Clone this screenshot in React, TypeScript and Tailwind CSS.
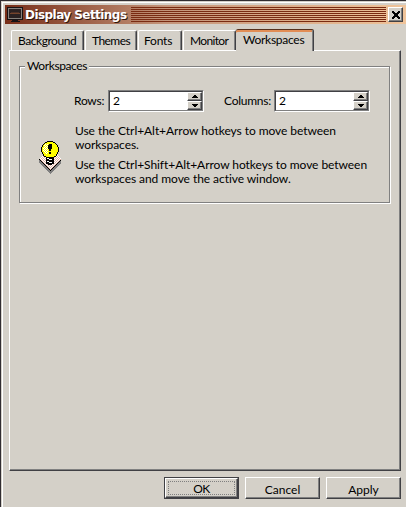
import React from "react";

const face = "bg-[#d4d0c8]";
const raised =
  "border border-b-[#404044] border-r-[#404044] border-l-white border-t-white shadow-[inset_-1px_-1px_0_#808080]";

function Tab({ children, className }: { children: React.ReactNode; className: string }) {
  return (
    <div className={`mr-px h-[20px] shrink-0 rounded-t-[2px] border-l border-t border-r border-l-white border-t-white border-r-[#404044] pt-px leading-[18px] whitespace-nowrap shadow-[inset_-1px_0_0_#808080] ${className}`}>
      {children}
    </div>
  );
}

function Arrow({ down = false }: { down?: boolean }) {
  return (
    <div className={`flex h-[9px] w-[15px] items-center justify-center ${raised} ${face}`}>
      <svg width="6" height="3" viewBox="0 0 6 3" shapeRendering="crispEdges">
        {down ? <path d="M0 0h6v1H5v1H4v1H2V2H1V1H0z" /> : <path d="M2 0h2v1h1v1h1v1H0V2h1V1h1z" />}
      </svg>
    </div>
  );
}

function Spinner({ value }: { value: string }) {
  return (
    <div className="h-[22px] w-[96px] border border-b-white border-r-white border-l-[#808080] border-t-[#808080]">
      <div className="flex h-[20px] w-[94px] justify-between border border-b-[#808080] border-r-[#808080] border-l-[#404044] border-t-[#404044] bg-white">
        <span className="pl-[3px] leading-[18px]">{value}</span>
        <div className="flex flex-col">
          <Arrow />
          <Arrow down />
        </div>
      </div>
    </div>
  );
}

function Button({ children }: { children: React.ReactNode }) {
  return (
    <div className={`flex h-[22px] w-[75px] items-center justify-center pt-[3px] ${raised} ${face}`}>
      {children}
    </div>
  );
}

function Monitor() {
  return (
    <svg width="16" height="15" viewBox="0 0 16 15" shapeRendering="crispEdges">
      <path fill="#171214" d="M0 0h16v13H0z" />
      <path fill="#85807c" d="M1 1h14v11H1z" />
      <path fill="#2a2122" d="M2 2h12v9H2z" />
      <path fill="#74442c" d="M3 6h10v1H3z" />
      <path fill="#4c3028" d="M4 5h8v1H4z" />
      <path fill="#171214" d="M5 13h6v1H5zM4 14h9v1H4z" />
    </svg>
  );
}

function Bulb() {
  return (
    <svg width="24" height="33" viewBox="0 0 24 33" shapeRendering="crispEdges">
      <defs>
        <pattern id="paper" width="2" height="2" patternUnits="userSpaceOnUse">
          <path fill="#fff" d="M0 0h2v2H0z" />
          <path fill="#e0b5a6" d="M0 0h1v1H0zM1 1h1v1H1z" />
        </pattern>
        <pattern id="glow" width="2" height="2" patternUnits="userSpaceOnUse">
          <path fill="#ff0" d="M0 0h2v2H0z" />
          <path fill="#fff" d="M0 0h1v1H0zM1 1h1v1H1z" />
        </pattern>
      </defs>
      <path fill="#808080" d="M1 18h22v4L12 33 1 22z" />
      <path fill="#d4d0c8" d="M0 17h24v1H0z" />
      <path fill="#000" d="M5 14h14l4 4v1L12 30 1 19v-1z" />
      <path fill="url(#paper)" d="M5 14h14l4 4-11 11L1 18z" />
      <path fill="#000" d="M9 0h6v1h2v1h1v1h1v1h1v2h1v5h-1v2h-1v2h-1v1h-2v7h-2v1h-4v-1H8v-7H6v-1H5v-2H4v-2H3V6h1V4h1V3h1V2h1V1h2z" />
      <path fill="#ff0" d="M9 1h6v1h2v1h1v1h1v2h1v5h-1v2h-1v2h-2v1H8v-1H6v-2H5v-2H4V6h1V4h1V3h1V2h2z" />
      <path fill="url(#glow)" d="M7 3h3v10H7v-1H6v-2H5V6h1V4h1z" />
      <path fill="#000" d="M11 3h3v5h-1v2h-2V8h-1V4h1zM11 11h2v2h-2z" />
      <path fill="#fff" d="M9 17h2v1H9zM11 18h3v1h-3zM9 20h2v1H9zM11 21h3v1h-3z" />
    </svg>
  );
}

export default function App() {
  return (
    <div className={`flex h-[507px] w-[406px] flex-col overflow-hidden border-l border-t border-[#302c30] pl-[1px] pt-[1px] font-['Lato',sans-serif] text-[12px] text-black ${face}`}>
      <div className="flex h-[505px] flex-col border-l border-t border-white pl-[2px] pt-[2px]">
        <div className="flex h-[19px] w-[401px] shrink-0 items-center bg-linear-to-r from-[#772d17] via-[#c4957a] via-40% to-[#f0c49a] pl-[2px]">
          <Monitor />
          <span className="ml-[2px] w-[106px] whitespace-nowrap font-['DejaVu_Sans',sans-serif] text-[12px] font-bold tracking-[-0.55px] text-white [text-shadow:1px_1px_0_#30150c]">Display Settings</span>
          <div className="h-[15px] w-[255px] bg-[repeating-linear-gradient(to_bottom,#792b12_0_1px,transparent_1px_2px)]" />
          <div className={`ml-[2px] flex h-[15px] w-[15px] shrink-0 items-center justify-center ${raised} ${face}`}>
            <svg width="8" height="8" viewBox="0 0 8 8" shapeRendering="crispEdges">
              <path d="M0 0h2v1h1v1h2V1h1V0h2v2H7v1H6v2h1v1h1v2H6V7H5V6H3v1H2v1H0V6h1V5h1V3H1V2H0z" />
            </svg>
          </div>
        </div>
        <div className="flex h-[26px] shrink-0 items-end pl-[6px]">
          <Tab className="w-[73px] pl-[6px] tracking-[-0.45px]">Background</Tab>
          <Tab className="w-[52px] pl-[6px] tracking-[-0.55px]">Themes</Tab>
          <Tab className="w-[44px] pl-[5px] tracking-[-0.2px]">Fonts</Tab>
          <Tab className="w-[53px] pl-[6px] tracking-[-0.65px]">Monitor</Tab>
          <div className={`relative z-10 -mb-px -ml-px h-[22px] w-[78px] rounded-t-[2px] border-r border-t border-r-[#404044] border-t-[#55301c] pl-[7px] leading-[20px] tracking-[-0.27px] shadow-[inset_-1px_0_0_#808080,inset_0_2px_0_#e28d55] ${face}`}>Workspaces</div>
        </div>
        <div className={`ml-[4px] h-[421px] w-[392px] shrink-0 px-[9px] pt-[8px] ${raised}`}>
          <fieldset className="h-[144px] w-[372px]">
            <div className="h-[7px] leading-[14px]"><span className={`relative z-10 ml-[6px] px-[2px] tracking-[-0.4px] ${face}`}>Workspaces</span></div>
            <div className="h-[137px] w-[371px] border border-[#808080] shadow-[1px_1px_0_#fff,inset_1px_1px_0_#fff]">
              <div className="flex items-center pl-[54px] pt-[23px]">
                <span className="w-[34px] tracking-[-0.25px]">Rows:</span>
                <Spinner value="2" />
                <span className="ml-[20px] w-[50px] tracking-[-0.25px]">Columns:</span>
                <Spinner value="2" />
              </div>
              <div className="flex pl-[18px]">
                <div className="w-[37px] pt-[29px]"><Bulb /></div>
                <div className="whitespace-nowrap pt-[12px] leading-[14px] tracking-[-0.06px]">
                  <p>Use the Ctrl+Alt+Arrow hotkeys to move between<br />workspaces.</p>
                  <p className="mt-[6px]">Use the Ctrl+Shift+Alt+Arrow hotkeys to move between<br />workspaces and move the active window.</p>
                </div>
              </div>
            </div>
          </fieldset>
        </div>
        <div className="mt-[6px] flex shrink-0 gap-[6px] pl-[159px]">
          <div className="h-[22px] w-[75px] border border-[#404044]">
            <div className={`flex h-[20px] w-[73px] p-[2px] ${raised}`}>
              <div className="flex flex-1 items-center justify-center border border-dotted border-[#808080] pt-[2px] tracking-[-0.6px]">OK</div>
            </div>
          </div>
          <Button>Cancel</Button>
          <Button>Apply</Button>
        </div>
      </div>
    </div>
  );
}
